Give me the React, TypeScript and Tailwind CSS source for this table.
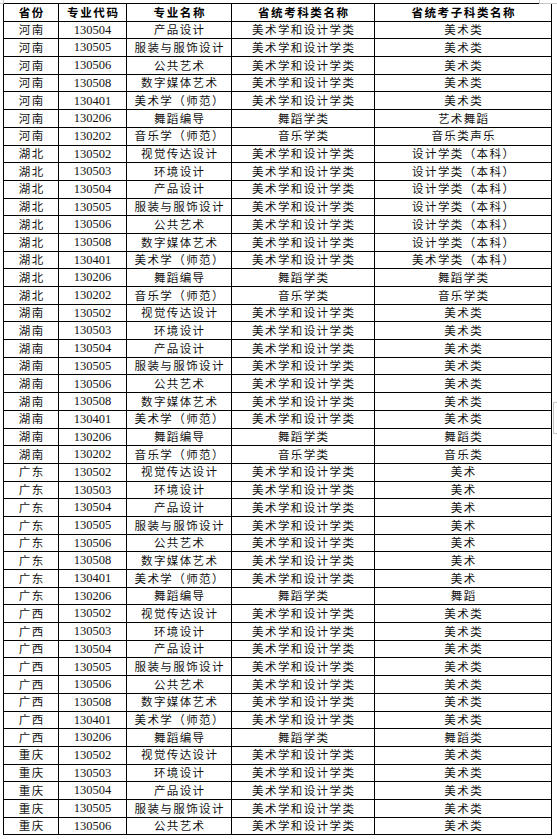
const cjk = "font-['Noto_Sans_CJK_SC','Noto_Sans',sans-serif]";

type Row = [string, string, string, string, string];

const ART = "美术学和设计学类";

const rows: Row[] = [
  ["河南", "130504", "产品设计", ART, "美术类"],
  ["河南", "130505", "服装与服饰设计", ART, "美术类"],
  ["河南", "130506", "公共艺术", ART, "美术类"],
  ["河南", "130508", "数字媒体艺术", ART, "美术类"],
  ["河南", "130401", "美术学（师范）", ART, "美术类"],
  ["河南", "130206", "舞蹈编导", "舞蹈学类", "艺术舞蹈"],
  ["河南", "130202", "音乐学（师范）", "音乐学类", "音乐类声乐"],
  ["湖北", "130502", "视觉传达设计", ART, "设计学类（本科）"],
  ["湖北", "130503", "环境设计", ART, "设计学类（本科）"],
  ["湖北", "130504", "产品设计", ART, "设计学类（本科）"],
  ["湖北", "130505", "服装与服饰设计", ART, "设计学类（本科）"],
  ["湖北", "130506", "公共艺术", ART, "设计学类（本科）"],
  ["湖北", "130508", "数字媒体艺术", ART, "设计学类（本科）"],
  ["湖北", "130401", "美术学（师范）", ART, "美术学类（本科）"],
  ["湖北", "130206", "舞蹈编导", "舞蹈学类", "舞蹈学类"],
  ["湖北", "130202", "音乐学（师范）", "音乐学类", "音乐学类"],
  ["湖南", "130502", "视觉传达设计", ART, "美术类"],
  ["湖南", "130503", "环境设计", ART, "美术类"],
  ["湖南", "130504", "产品设计", ART, "美术类"],
  ["湖南", "130505", "服装与服饰设计", ART, "美术类"],
  ["湖南", "130506", "公共艺术", ART, "美术类"],
  ["湖南", "130508", "数字媒体艺术", ART, "美术类"],
  ["湖南", "130401", "美术学（师范）", ART, "美术类"],
  ["湖南", "130206", "舞蹈编导", "舞蹈学类", "舞蹈类"],
  ["湖南", "130202", "音乐学（师范）", "音乐学类", "音乐类"],
  ["广东", "130502", "视觉传达设计", ART, "美术"],
  ["广东", "130503", "环境设计", ART, "美术"],
  ["广东", "130504", "产品设计", ART, "美术"],
  ["广东", "130505", "服装与服饰设计", ART, "美术"],
  ["广东", "130506", "公共艺术", ART, "美术"],
  ["广东", "130508", "数字媒体艺术", ART, "美术"],
  ["广东", "130401", "美术学（师范）", ART, "美术"],
  ["广东", "130206", "舞蹈编导", "舞蹈学类", "舞蹈"],
  ["广西", "130502", "视觉传达设计", ART, "美术类"],
  ["广西", "130503", "环境设计", ART, "美术类"],
  ["广西", "130504", "产品设计", ART, "美术类"],
  ["广西", "130505", "服装与服饰设计", ART, "美术类"],
  ["广西", "130506", "公共艺术", ART, "美术类"],
  ["广西", "130508", "数字媒体艺术", ART, "美术类"],
  ["广西", "130401", "美术学（师范）", ART, "美术类"],
  ["广西", "130206", "舞蹈编导", "舞蹈学类", "舞蹈类"],
  ["重庆", "130502", "视觉传达设计", ART, "美术类"],
  ["重庆", "130503", "环境设计", ART, "美术类"],
  ["重庆", "130504", "产品设计", ART, "美术类"],
  ["重庆", "130505", "服装与服饰设计", ART, "美术类"],
  ["重庆", "130506", "公共艺术", ART, "美术类"],
];

const headers = ["省份", "专业代码", "专业名称", "省统考科类名称", "省统考子科类名称"];

const Cell = ({ children, mono }: { children: React.ReactNode; mono?: boolean }) => (
  <div className="flex items-center justify-center border-r border-b border-black overflow-hidden whitespace-nowrap">
    {mono ? (
      <span className="font-['Liberation_Serif',serif] text-[12.5px] text-[#111]">{children}</span>
    ) : (
      <span className={`${cjk} text-[11.5px] tracking-[1.4px] pl-[1.4px] text-[#111]`}>{children}</span>
    )}
  </div>
);

export default function App() {
  return (
    <div className="relative w-[557px] h-[839px] bg-white">
      <div className="pt-[3px] pl-[3px]">
        <div className="grid grid-cols-[55px_68px_105px_143px_177px] auto-rows-[17.7px] w-[548px] border-l border-t border-black leading-none">
          {headers.map((h) => (
            <div key={h} className="flex items-center justify-center border-r border-b border-black whitespace-nowrap">
              <span className={`${cjk} text-[11.5px] font-bold tracking-[1.6px] pl-[1.6px] text-black`}>{h}</span>
            </div>
          ))}
          {rows.map((r, i) => (
            <div key={i} className="contents">
              <Cell>{r[0]}</Cell>
              <Cell mono>{r[1]}</Cell>
              <Cell>{r[2]}</Cell>
              <Cell>{r[3]}</Cell>
              <Cell>{r[4]}</Cell>
            </div>
          ))}
        </div>
      </div>

      {/* editor corner marks */}
      <div className="absolute left-0 top-0 w-[4px] h-[4px] border-r border-b border-[#c8c8c8]" />
      <div className="absolute left-[539px] top-0 w-[18px] h-[4px] border-l border-b border-[#c8c8c8]" />
      <div className="absolute left-[553px] top-[402px] w-[4px] h-[32px] border-l border-t border-b border-[#c8c8c8]" />
    </div>
  );
}
